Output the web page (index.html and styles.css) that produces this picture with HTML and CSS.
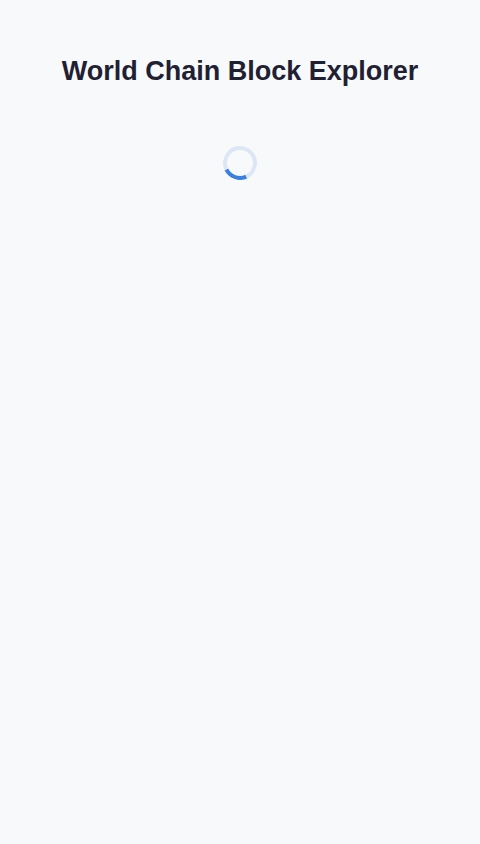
FILE: index.html
```html
<!DOCTYPE html>
<html>
    <head>
        <title>World Chain Block Explorer</title>
        <link rel="stylesheet" href="styles.css">
    </head>
    <body>
        <main class="app">
            <h1 class="title">World Chain Block Explorer</h1>
            <div class="loading">
                <div class="spinner"></div>
            </div>
        </main>
    </body>
</html>
```

FILE: styles.css
```css
body {
    margin: 0;
    background-color: #f8f9fb;
    color: #1f2133;
    font-family: "Liberation Sans", Arial, sans-serif;
}

.app {
    padding: 56px 16px 0 16px;
}

.title {
    margin: 0;
    font-size: 27px;
    font-weight: bold;
    text-align: center;
}

.loading {
    display: flex;
    justify-content: center;
    padding-top: 59px;
}

.spinner {
    width: 26px;
    height: 26px;
    border: 4px solid #dde6f4;
    border-bottom-color: #3b7fe0;
    border-radius: 50%;
    transform: rotate(20deg);
}
```
